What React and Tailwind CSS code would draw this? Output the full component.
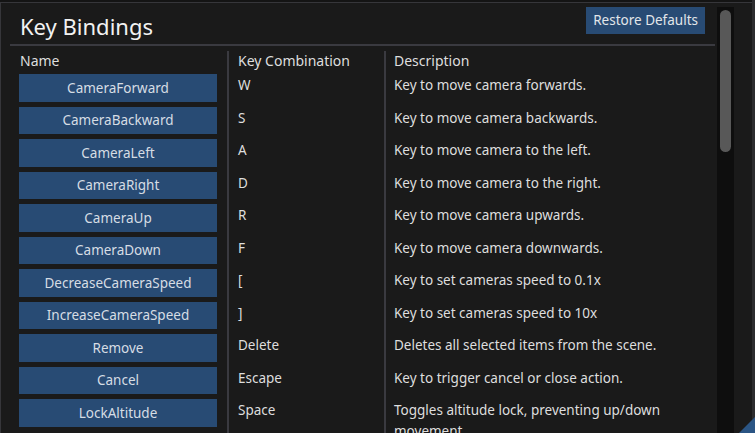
const bindings = [
  { name: "CameraForward", key: "W", desc: "Key to move camera forwards." },
  { name: "CameraBackward", key: "S", desc: "Key to move camera backwards." },
  { name: "CameraLeft", key: "A", desc: "Key to move camera to the left." },
  { name: "CameraRight", key: "D", desc: "Key to move camera to the right." },
  { name: "CameraUp", key: "R", desc: "Key to move camera upwards." },
  { name: "CameraDown", key: "F", desc: "Key to move camera downwards." },
  { name: "DecreaseCameraSpeed", key: "[", desc: "Key to set cameras speed to 0.1x" },
  { name: "IncreaseCameraSpeed", key: "]", desc: "Key to set cameras speed to 10x" },
  { name: "Remove", key: "Delete", desc: "Deletes all selected items from the scene." },
  { name: "Cancel", key: "Escape", desc: "Key to trigger cancel or close action." },
  {
    name: "LockAltitude",
    key: "Space",
    desc: "Toggles altitude lock, preventing up/down movement.",
  },
];

const App = () => {
  return (
    <div
      className="relative w-[755px] h-[433px] overflow-hidden bg-[#141414] text-[#dedede]"
      style={{ fontFamily: '"Noto Sans", "Open Sans", sans-serif' }}
    >
      <div className="flex h-full pt-[2px] border-r-[3px] border-[#2c2c2e]">
        <div className="flex flex-1 border-t border-l border-[#36363a] bg-[#1a1a1a]">
          {/* Content */}
          <div className="w-[705px] ml-[9px] flex flex-col">
            {/* Title bar */}
            <div className="shrink-0 flex items-center justify-between h-[41px] pl-[10px] pr-[10px]">
              <h1 className="text-[22px] leading-none text-[#f2f2f2] mt-[4px]">Key Bindings</h1>
              <button className="bg-[#284b74] text-[13.5px] text-[#e2e6ea] px-[7px] h-[27px] -mt-[7px]">
                Restore Defaults
              </button>
            </div>
            <div className="shrink-0 h-[2px] bg-[#3a3a40]" />

            {/* Table */}
            <div className="shrink-0 grid grid-cols-[217px_157px_1fr]">
              <div className="pl-[10px] pt-[5px] h-[28px] text-[14px] leading-[20px]">Name</div>
              <div className="border-l-2 border-[#3a3a40] mt-[5px] pl-[9px] text-[14px] leading-[20px]">
                Key Combination
              </div>
              <div className="border-l-2 border-[#3a3a40] mt-[5px] pl-[8px] text-[14px] leading-[20px]">
                Description
              </div>

              {bindings.map((b) => (
                <div key={b.name} className="contents">
                  <div className="pl-[9px] pr-[10px] h-[32.5px]">
                    <button className="w-full h-[27.5px] bg-[#284b74] text-[13.5px] text-[#d6dde4]">
                      {b.name}
                    </button>
                  </div>
                  <div className="border-l-2 border-[#3a3a40] pl-[9px] pt-[1px] text-[13.5px] leading-[20px]">
                    {b.key}
                  </div>
                  <div className="border-l-2 border-[#3a3a40] pl-[8px] pt-[1px] text-[13.5px] leading-[21px] pr-[20px]">
                    {b.desc}
                  </div>
                </div>
              ))}
            </div>
          </div>

          {/* Scrollbar */}
          <div className="ml-[2px] mt-[4px] w-[17px] bg-[#0e0e0e] flex justify-center pt-[3px]">
            <div className="w-[11px] h-[142px] rounded-full bg-[#585858]" />
          </div>
        </div>
      </div>

      {/* Resize grip */}
      <svg className="absolute right-0 bottom-0" width="16" height="16" viewBox="0 0 16 16">
        <polygon points="16,0 16,16 0,16" fill="#2b5584" />
      </svg>
    </div>
  );
};

export default App;
